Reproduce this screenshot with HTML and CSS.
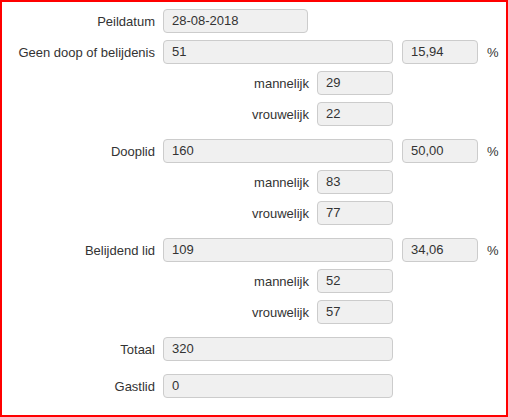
FILE: index.html
```html
<!DOCTYPE html>
<html lang="nl">
<head>
    <meta charset="UTF-8">
    <title>Ledenstatistiek</title>
    <link rel="stylesheet" href="styles.css">
</head>
<body>
    <div class="panel">
        <div class="group">
            <div class="row">
                <label class="label">Peildatum</label>
                <div class="field date">28-08-2018</div>
            </div>
            <div class="row">
                <label class="label">Geen doop of belijdenis</label>
                <div class="field wide">51</div>
                <div class="field small pct">15,94</div>
                <span class="unit">%</span>
            </div>
            <div class="row sub">
                <label class="label">mannelijk</label>
                <div class="field small">29</div>
            </div>
            <div class="row sub">
                <label class="label">vrouwelijk</label>
                <div class="field small">22</div>
            </div>
        </div>

        <div class="group">
            <div class="row">
                <label class="label">Dooplid</label>
                <div class="field wide">160</div>
                <div class="field small pct">50,00</div>
                <span class="unit">%</span>
            </div>
            <div class="row sub">
                <label class="label">mannelijk</label>
                <div class="field small">83</div>
            </div>
            <div class="row sub">
                <label class="label">vrouwelijk</label>
                <div class="field small">77</div>
            </div>
        </div>

        <div class="group">
            <div class="row">
                <label class="label">Belijdend lid</label>
                <div class="field wide">109</div>
                <div class="field small pct">34,06</div>
                <span class="unit">%</span>
            </div>
            <div class="row sub">
                <label class="label">mannelijk</label>
                <div class="field small">52</div>
            </div>
            <div class="row sub">
                <label class="label">vrouwelijk</label>
                <div class="field small">57</div>
            </div>
        </div>

        <div class="group">
            <div class="row">
                <label class="label">Totaal</label>
                <div class="field wide">320</div>
            </div>
        </div>

        <div class="group">
            <div class="row">
                <label class="label">Gastlid</label>
                <div class="field wide">0</div>
            </div>
        </div>
    </div>
</body>
</html>
```

FILE: styles.css
```css
* {
    margin: 0;
    padding: 0;
    box-sizing: border-box;
}
body {
    font-family: 'Liberation Sans', Arial, sans-serif;
    font-size: 13px;
    color: #333;
    background: #fff;
}
.panel {
    width: 508px;
    height: 417px;
    border: 2px solid #ff0000;
    padding-top: 7px;
    display: flex;
    flex-direction: column;
    gap: 13px;
}
.group {
    display: flex;
    flex-direction: column;
    gap: 7px;
}
.row {
    display: flex;
    align-items: center;
    height: 24px;
}
.label {
    width: 153px;
    text-align: right;
    margin-right: 8px;
}
.sub .label {
    width: 307px;
}
.field {
    height: 24px;
    line-height: 22px;
    padding: 0 8px;
    background: #f0f0f0;
    border: 1px solid #ccc;
    border-radius: 4px;
}
.date {
    width: 145px;
}
.wide {
    width: 230px;
}
.small {
    width: 76px;
}
.pct {
    margin-left: 9px;
}
.unit {
    margin-left: 9px;
}
```
